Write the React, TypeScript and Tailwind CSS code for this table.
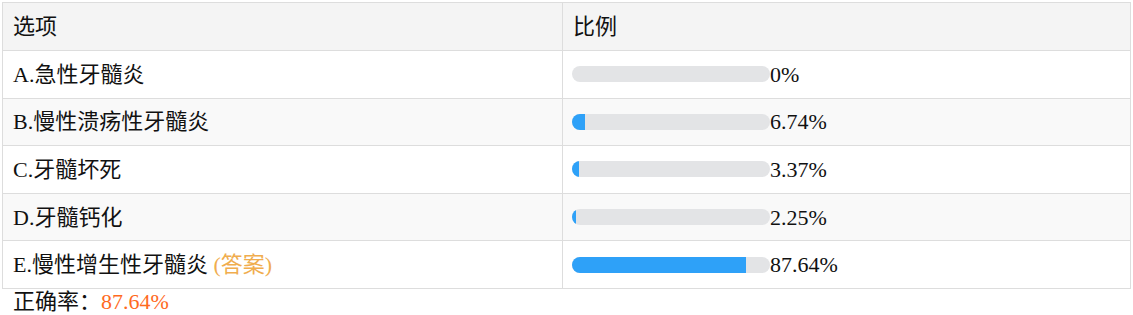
const rows = [
  { label: "A.急性牙髓炎", pct: 0, text: "0%" },
  { label: "B.慢性溃疡性牙髓炎", pct: 6.74, text: "6.74%" },
  { label: "C.牙髓坏死", pct: 3.37, text: "3.37%" },
  { label: "D.牙髓钙化", pct: 2.25, text: "2.25%" },
  { label: "E.慢性增生性牙髓炎", pct: 87.64, text: "87.64%", answer: true },
];

export default function App() {
  return (
    <div className="bg-white font-['Liberation_Serif','Times_New_Roman','Noto_Sans_CJK_SC',serif] text-[22px] text-[#111] px-[2px] pt-[2px]">
      <table className="w-full border-collapse border border-[#dddddd]">
        <thead>
          <tr className="h-[48px] bg-[#f4f4f4]">
            <th className="w-[560px] border border-[#dddddd] px-[10px] text-left font-normal">
              选项
            </th>
            <th className="border border-[#dddddd] px-[10px] text-left font-normal">比例</th>
          </tr>
        </thead>
        <tbody>
          {rows.map((r, i) => (
            <tr key={r.label} className={`h-[47.6px] ${i % 2 === 1 ? "bg-[#f9f9f9]" : "bg-white"}`}>
              <td className="border border-[#dddddd] px-[10px]">
                {r.label}
                {r.answer && <span className="text-[#f0ad4e]"> (答案)</span>}
              </td>
              <td className="border border-[#dddddd] px-[9px]">
                <div className="flex items-center">
                  <div className="h-[16px] w-[198px] overflow-hidden rounded-full bg-[#e3e4e6]">
                    <div className="h-full bg-[#2ea1f8]" style={{ width: `${r.pct}%` }} />
                  </div>
                  <span>{r.text}</span>
                </div>
              </td>
            </tr>
          ))}
        </tbody>
      </table>
      <div className="px-[11px] leading-[26px]">
        正确率：<span className="text-[#ff6a1e]">87.64%</span>
      </div>
    </div>
  );
}
